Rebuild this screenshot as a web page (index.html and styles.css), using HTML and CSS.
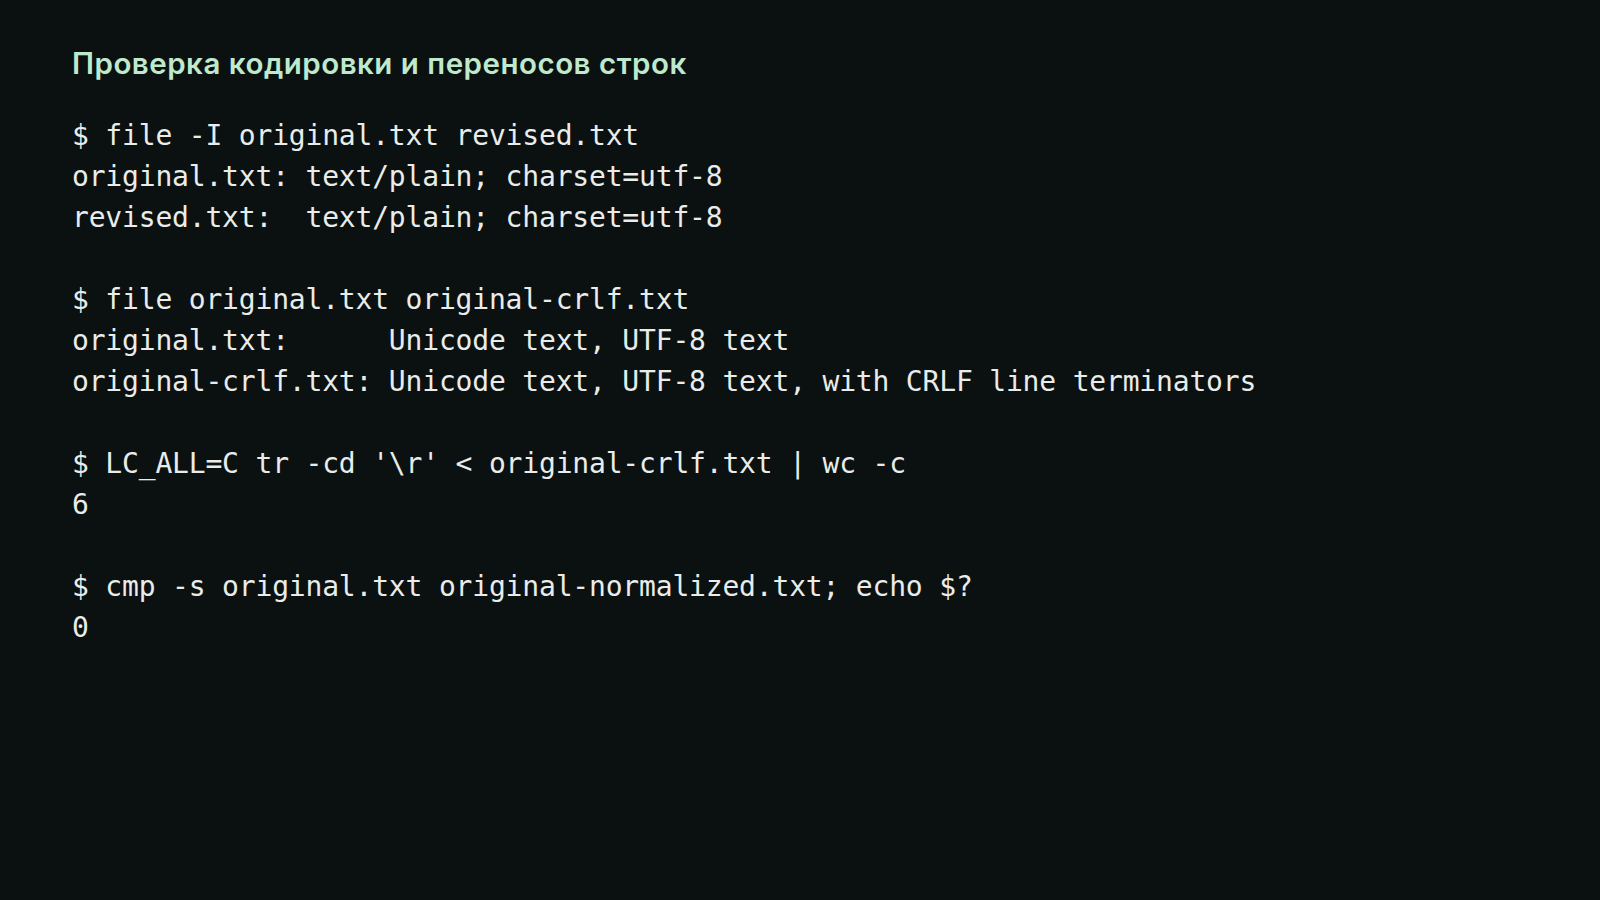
FILE: index.html
```html
<!DOCTYPE html>
<html lang="ru">
<head>
<meta charset="utf-8">
<title>Проверка кодировки и переносов строк</title>
<link rel="stylesheet" href="styles.css">
</head>
<body>
<main class="slide">
<h1 class="title">Проверка кодировки и переносов строк</h1>
<pre class="terminal">$ file -I original.txt revised.txt
original.txt: text/plain; charset=utf-8
revised.txt:  text/plain; charset=utf-8

$ file original.txt original-crlf.txt
original.txt:      Unicode text, UTF-8 text
original-crlf.txt: Unicode text, UTF-8 text, with CRLF line terminators

$ LC_ALL=C tr -cd '\r' &lt; original-crlf.txt | wc -c
6

$ cmp -s original.txt original-normalized.txt; echo $?
0</pre>
</main>
</body>
</html>
```
FILE: styles.css
```css
html, body {
  margin: 0;
  padding: 0;
  background: #0a1110;
  height: 100%;
}
.slide {
  box-sizing: border-box;
  width: 1600px;
  height: 900px;
  padding: 45px 72px 0;
  display: flex;
  flex-direction: column;
  gap: 34px;
}
.title {
  margin: 0;
  font-family: Inter, "Noto Sans", sans-serif;
  font-weight: 600;
  font-size: 29.5px;
  line-height: 36px;
  letter-spacing: 0.5px;
  color: #bfe9cd;
}
.terminal {
  margin: 0;
  font-family: "DejaVu Sans Mono", "Liberation Mono", monospace;
  font-size: 28px;
  line-height: 41px;
  letter-spacing: -0.18px;
  color: #e9ecea;
  white-space: pre;
}
```
